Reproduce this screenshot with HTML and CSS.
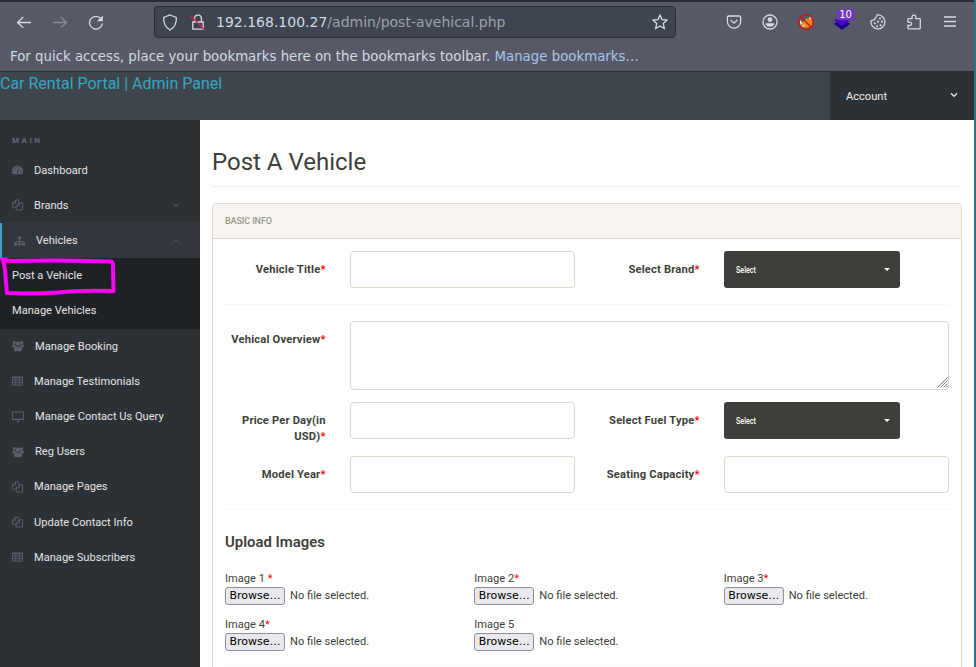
FILE: index.html
```html
<!DOCTYPE html>
<html lang="en">
<head>
<meta charset="utf-8">
<title>Car Rental Portal | Admin Panel</title>
<link rel="stylesheet" href="styles.css">
</head>
<body>
<svg class="defs" width="0" height="0">
  <symbol id="files" viewBox="0 0 12 12"><path d="M4 .5h3v2.700M4 .5.5 4v4.500h4M4 .5V4H.5M8 3.500h3.500v8h-7V7zM8 3.500V7H4.500"/></symbol>
  <symbol id="table" viewBox="0 0 12 12"><path d="M.5 1.500h11v9H.5zM.5 2.500h11M.5 5h11M.5 7.700h11M4.200 2v8.500M7.800 2v8.500"/></symbol>
  <symbol id="users" viewBox="0 0 13 12"><g fill="currentColor" stroke="none"><circle cx="2.600" cy="2.200" r="1.700"/><circle cx="10.400" cy="2.200" r="1.700"/><circle cx="6.500" cy="3.600" r="2.500"/><path d="M.2 6.700q0-2.500 1.400-2.500 1 .7 2 .3 0 1 .8 1.800-1 0-1.700 1H1Q.2 7.300.2 6.700zM12.800 6.700q0-2.500-1.400-2.500-1 .7-2 .3 0 1-.8 1.800 1 0 1.700 1H12q.8 0 .8-.6zM2.100 9.800q0-3.600 2.200-3.600 2.200 1.300 4.400 0 2.200 0 2.200 3.600 0 1.900-1.500 1.900H3.600q-1.500 0-1.500-1.900z"/></g></symbol>
  <symbol id="chevron" viewBox="0 0 8 6"><path d="M1 1.200 4 4.400 7 1.200"/></symbol>
</svg>

<div class="window">
<div class="browser">
  <div class="toolbar">
    <div class="nav-buttons">
      <svg width="16" height="16" viewBox="0 0 16 16"><path d="M15 8.500H1.500M7.300 3 1.500 8.500l5.800 5.200"/></svg>
      <svg class="dim" width="16" height="16" viewBox="0 0 16 16"><path d="M1 8.500h13.500M8.700 3l5.800 5.500-5.800 5.200"/></svg>
      <svg width="16" height="16" viewBox="0 0 16 16"><path d="M13 4.800A6.400 6.400 0 1 0 14.300 9.500"/><path d="M14.800 1.500v5.800H9z" fill="currentColor" stroke="none"/></svg>
    </div>
    <div class="urlbar">
      <svg width="16" height="17" viewBox="0 0 16 17"><path d="M8 1 14.300 3.400Q15 12 8 16 1 12 1.700 3.400z"/></svg>
      <svg class="lock" width="16" height="17" viewBox="0 0 16 17"><path d="M4.600 8V4.600a3.400 3.400 0 0 1 6.800 0V8M2.800 8h10.400v7.200H2.800z"/><path class="slash" d="M1.200 2.200 14.600 16"/></svg>
      <div class="url">192.168.100.27<span>/admin/post-avehical.php</span></div>
      <svg class="star" width="16" height="16" viewBox="0 0 16 16"><path d="m8 1 2 4.600 5 .5-3.700 3.400 1 5L8 12l-4.300 2.500 1-5L1 6.100l5-.5z"/></svg>
    </div>
    <div class="actions">
      <svg width="16" height="16" viewBox="0 0 16 16"><path d="M2.600 2h10.800q1.200 0 1.200 1.200V7.500a6.600 6.600 0 0 1-13.200 0V3.200Q1.400 2 2.600 2zM4.700 6 8 9.100 11.300 6"/></svg>
      <svg width="16" height="16" viewBox="0 0 16 16"><circle cx="8" cy="8" r="7"/><circle cx="8" cy="5.700" r="2.400" fill="currentColor" stroke="none"/><path d="M3.600 9.200h8.800Q11.500 12.700 8 12.700T3.600 9.200z" fill="currentColor" stroke="none"/></svg>
      <svg width="16" height="16" viewBox="0 0 16 16"><path d="M2 9 5 8l3-3 4-1 3 3-1 5-5 2-5-1z" fill="#e88a12" stroke="none"/><path d="m1.500 5 3 4-2 2zM12 2.500l2 3-3-1zM4 12l3-2-1 3z" fill="#e8e5e0" stroke="none"/><circle cx="8" cy="8" r="7.300" stroke="#d4100c"/><path d="m3 3 10 10" stroke="#d4100c"/></svg>
      <div class="stack"><svg width="16" height="17" viewBox="0 0 16 17"><path d="m0 10 3-2.500 5 3 5-3 3 2.500-8 6z" fill="#210083" stroke="none"/><path d="m0 6 8-4 8 4-8 6z" fill="#4c08c7" stroke="none"/></svg><span class="badge">10</span></div>
      <svg width="16" height="16" viewBox="0 0 16 16"><path d="M7 1a7 7 0 1 1-6 8Q.6 7.500 1.300 6.500q1.700.4 2.300-.9 1.700.2 1.500-1.600Q7 3.200 7 1z"/><g fill="currentColor" stroke="none"><circle cx="10" cy="4.500" r="1.100"/><circle cx="8" cy="7.700" r="1.100"/><circle cx="12" cy="7.700" r="1.100"/><circle cx="4.700" cy="9.300" r="1.100"/><circle cx="10.600" cy="11.300" r="1.100"/><circle cx="7" cy="12.200" r="1"/></g></svg>
      <svg width="16" height="16" viewBox="0 0 16 16"><path d="M2.700 4.600H6V3a1.900 1.900 0 0 1 3.800 0v1.600h3.700q.8 0 .8.800v8.600q0 .8-.8.800H2.700q-.8 0-.8-.8v-2.500h2a1.700 1.700 0 0 0 0-3.400h-2V5.400q0-.8.800-.8z"/></svg>
      <svg width="16" height="16" viewBox="0 0 16 16"><path d="M2 3h12M2 7.500h12M2 12h12"/></svg>
    </div>
  </div>
  <div class="bookmarks"><span class="hint">For quick access, place your bookmarks here on the bookmarks toolbar.</span> <a>Manage bookmarks…</a></div>
</div>

<header class="brand">
  <a class="brand-name">Car Rental Portal | Admin Panel</a>
  <div class="account"><span>Account</span><svg width="8" height="6"><use href="#chevron"/></svg></div>
</header>

<div class="content">
  <nav class="sidebar">
    <div class="group">MAIN</div>
    <a class="item"><svg width="11" height="12" viewBox="0 0 12 12"><path d="M0 7a6 6 0 0 1 12 0q0 1.800-1 3.500H1Q0 8.800 0 7z" fill="currentColor" stroke="none"/><path class="cut" d="M1.500 7H3M3 3.700l.9.900M6 2v1.500M9 3.700l-.9.900M10.500 7H9M6 8.500l.8-3.500M5.300 8.800h1.400"/></svg>Dashboard</a>
    <a class="item"><svg width="11" height="12"><use href="#files"/></svg>Brands<svg class="more" width="8" height="6"><use href="#chevron"/></svg></a>
    <a class="item open"><svg width="11" height="12" viewBox="0 0 12 12"><path d="M6 3v6M1.800 9V6.500h8.400V9"/><path d="M4.200 1h3.600v3.200H4.200zM0 8h3.500v3H0zM4.200 8h3.600v3H4.200zM8.500 8H12v3H8.500z" fill="currentColor" stroke="none"/></svg>Vehicles<svg class="more up" width="8" height="6"><use href="#chevron"/></svg></a>
    <div class="submenu">
      <a class="item">Post a Vehicle
        <svg class="scribble" width="118" height="44" viewBox="0 0 118 44"><path d="M2 6 10 8 Q60 7 111 8.500 Q114 10 113 16 L113.500 38 Q80 37 58 39.500 Q30 41 7 40 L5.500 24 Q5 12 2.500 6"/></svg></a>
      <a class="item">Manage Vehicles</a>
    </div>
    <a class="item"><svg width="12" height="12"><use href="#users"/></svg>Manage Booking</a>
    <a class="item"><svg width="11" height="12"><use href="#table"/></svg>Manage Testimonials</a>
    <a class="item"><svg width="12" height="12" viewBox="0 0 12 12"><path d="M.6 1h10.800v7.500H.6zM.6 8.200h10.800M4.500 10.800h3M6 8v3"/></svg>Manage Contact Us Query</a>
    <a class="item"><svg width="12" height="12"><use href="#users"/></svg>Reg Users</a>
    <a class="item"><svg width="11" height="12"><use href="#files"/></svg>Manage Pages</a>
    <a class="item"><svg width="11" height="12"><use href="#files"/></svg>Update Contact Info</a>
    <a class="item"><svg width="11" height="12"><use href="#table"/></svg>Manage Subscribers</a>
  </nav>

  <main>
    <h1>Post A Vehicle</h1>
    <section class="panel">
      <div class="panel-heading">BASIC INFO</div>
      <form class="panel-body">
        <div class="row">
          <label>Vehicle Title<i>*</i></label><div><input type="text"></div>
          <label>Select Brand<i>*</i></label><div><button type="button" class="select"><span>Select</span></button></div>
        </div>
        <hr>
        <div class="row">
          <label>Vehical Overview<i>*</i></label><div class="wide"><textarea></textarea><svg class="grip" width="11" height="11" viewBox="0 0 11 11"><path d="M.5 10.500l10-10M3.500 10.500l7-7M6.500 10.500l4-4M9 10.500l1.500-1.500"/></svg></div>
        </div>
        <div class="row price">
          <label>Price Per Day(in USD)<i>*</i></label><div><input type="text"></div>
          <label>Select Fuel Type<i>*</i></label><div><button type="button" class="select"><span>Select</span></button></div>
        </div>
        <div class="row">
          <label>Model Year<i>*</i></label><div><input type="text"></div>
          <label>Seating Capacity<i>*</i></label><div><input type="text"></div>
        </div>
        <hr>
        <h4>Upload Images</h4>
        <div class="uploads">
          <div class="upload">Image 1 <i>*</i><div class="file"><button type="button">Browse…</button>No file selected.</div></div>
          <div class="upload">Image 2<i>*</i><div class="file"><button type="button">Browse…</button>No file selected.</div></div>
          <div class="upload">Image 3<i>*</i><div class="file"><button type="button">Browse…</button>No file selected.</div></div>
          <div class="upload">Image 4<i>*</i><div class="file"><button type="button">Browse…</button>No file selected.</div></div>
          <div class="upload">Image 5<div class="file"><button type="button">Browse…</button>No file selected.</div></div>
        </div>
        <hr class="last">
      </form>
    </section>
  </main>
</div>
</div>
</body>
</html>
```
FILE: styles.css
```css
* { box-sizing: border-box; }
html, body { height: 667px; overflow: hidden; }
body { margin: 0; background: #fff; font: 11.1px/16px Roboto, sans-serif; color: #3e3f3a; }
svg { flex: none; fill: none; stroke: currentColor; stroke-width: 1.3; display: block; }
.defs { position: absolute; }
i { font-style: normal; color: #f00; }
.window { height: 667px; overflow: hidden; border-right: 2px solid #2c7184; }

.browser { height: 72px; background: #585966; border-top: 2px solid #292d34; border-bottom: 1px solid #2a2d34; color: #d3dae3; font-family: "DejaVu Sans", sans-serif; }
.toolbar { height: 40px; display: flex; align-items: center; }
.nav-buttons { display: flex; gap: 20px; width: 154px; padding-left: 16px; }
.dim { opacity: .4; }
.urlbar { width: 522px; height: 32px; display: flex; align-items: center; padding: 0 7px; border: 1px solid #2b2e39; border-radius: 4px; background: #3f4550; }
.lock { margin-left: 12px; }
.slash { stroke: #e2214f; }
.url { margin-left: 10px; flex: 1; font-size: 14px; white-space: nowrap; }
.url span { color: #9da2ab; }
.actions { display: flex; gap: 20px; margin-left: 50px; }
.stack { position: relative; width: 16px; height: 16px; }
.badge { position: absolute; left: 3px; top: -5px; width: 17px; height: 11px; background: #6f35c4; color: #fff; border-radius: 1px; font-size: 10px; line-height: 11px; text-align: center; }
.bookmarks { height: 29px; padding-left: 10px; font-size: 13.33px; line-height: 30px; white-space: nowrap; }
.bookmarks a { color: #a5c8ee; }

.brand { height: 48px; display: flex; justify-content: space-between; background: #3e454c; }
.brand-name { color: #37a6c4; font-size: 16px; line-height: 24px; }
.account { width: 144px; display: flex; align-items: center; justify-content: space-between; padding: 1px 16px 0; background: #2c3136; color: #eee; }
.account svg { margin-top: -4px; }

.content { display: flex; height: 547px; }
.sidebar { width: 200px; background: #2c3136; color: #e4e4e4; }
.group { height: 32.6px; padding: 13px 12px 0; font-size: 8px; letter-spacing: 2.5px; color: #666a70; font-weight: 700; }
.item { height: 35.2px; display: flex; align-items: center; gap: 11px; padding: 1px 12px 0; white-space: nowrap; position: relative; }
.item > svg { color: #5b6067; stroke-width: 1; margin-top: -1px; }
.item .cut { stroke: #2c3136; }
.item .more { margin-left: auto; margin-right: 8px; }
.up { transform: rotate(180deg); }
.open { background: #32373e; border-left: 2px solid #37a6c4; }
.submenu { background: #1e2225; }
.item > .scribble { position: absolute; left: 0; top: -4px; color: #f0f; stroke-width: 4; z-index: 2; stroke-linejoin: round; stroke-linecap: round; }

main { flex: 1; padding: 0 12px; overflow: hidden; }
h1 { margin: 24px 0 16px; height: 43px; border-bottom: 1px solid #eeeeee; font-size: 24px; font-weight: 400; line-height: 36px; }
.panel { border: 1px solid #dfd7ca; border-radius: 4px; height: 520px; overflow: hidden; }
.panel-heading { height: 35px; padding: 0 12px; background: #f8f5f0; border-bottom: 1px solid #dfd7ca; color: #98978b; font-size: 9px; font-weight: 500; letter-spacing: -.1px; line-height: 34px; }
.panel-body { padding: 12px 12px 0; }
.row { display: grid; grid-template-columns: 2fr 4fr 2fr 4fr; margin: 0 -12px; }
.row > * { padding: 0 12px; min-width: 0; }
.row label { padding-top: 11px; text-align: right; font-size: 11.2px; letter-spacing: .17px; font-weight: 700; }
.row .wide { grid-column: span 3; position: relative; }
.row input, textarea { display: block; width: 100%; height: 37px; border: 1px solid #dfd7ca; border-radius: 4px; background: #fff; resize: none; outline: 0; }
textarea { height: 69px; }
.grip { position: absolute; right: 13px; bottom: 2px; stroke: #777; stroke-width: 1; }
.price { margin: 12px -12px 11px; }
hr { margin: 16px 0; border: 0; border-top: 1px dotted #f0f0f0; }
.select { width: 176px; height: 37px; display: flex; align-items: center; justify-content: space-between; padding: 0 10px 0 12px; border: 0; border-radius: 3px; background: #3e3f3a; color: #fff; font: 500 9.5px Roboto, sans-serif; }
.select span { transform: scaleX(.75); transform-origin: left; }
.select::after { content: ""; border: 3px solid transparent; border-top-color: #fff; border-bottom: 0; }
h4 { margin: 21px 0 18px; font-size: 14.9px; line-height: 22px; font-weight: 600; }
.uploads { display: grid; grid-template-columns: repeat(3, 1fr); margin-right: -24px; row-gap: 12px; }
.upload { height: 34px; }
.file { display: flex; align-items: center; gap: 5px; height: 17px; }
.file button { width: 60px; height: 18px; padding: 0; border: 1px solid #8f8f9d; border-radius: 3px; background: #e9e9ed; color: #000; font: 11px/15px "DejaVu Sans", sans-serif; }
.last { margin-top: 14px; }
```
